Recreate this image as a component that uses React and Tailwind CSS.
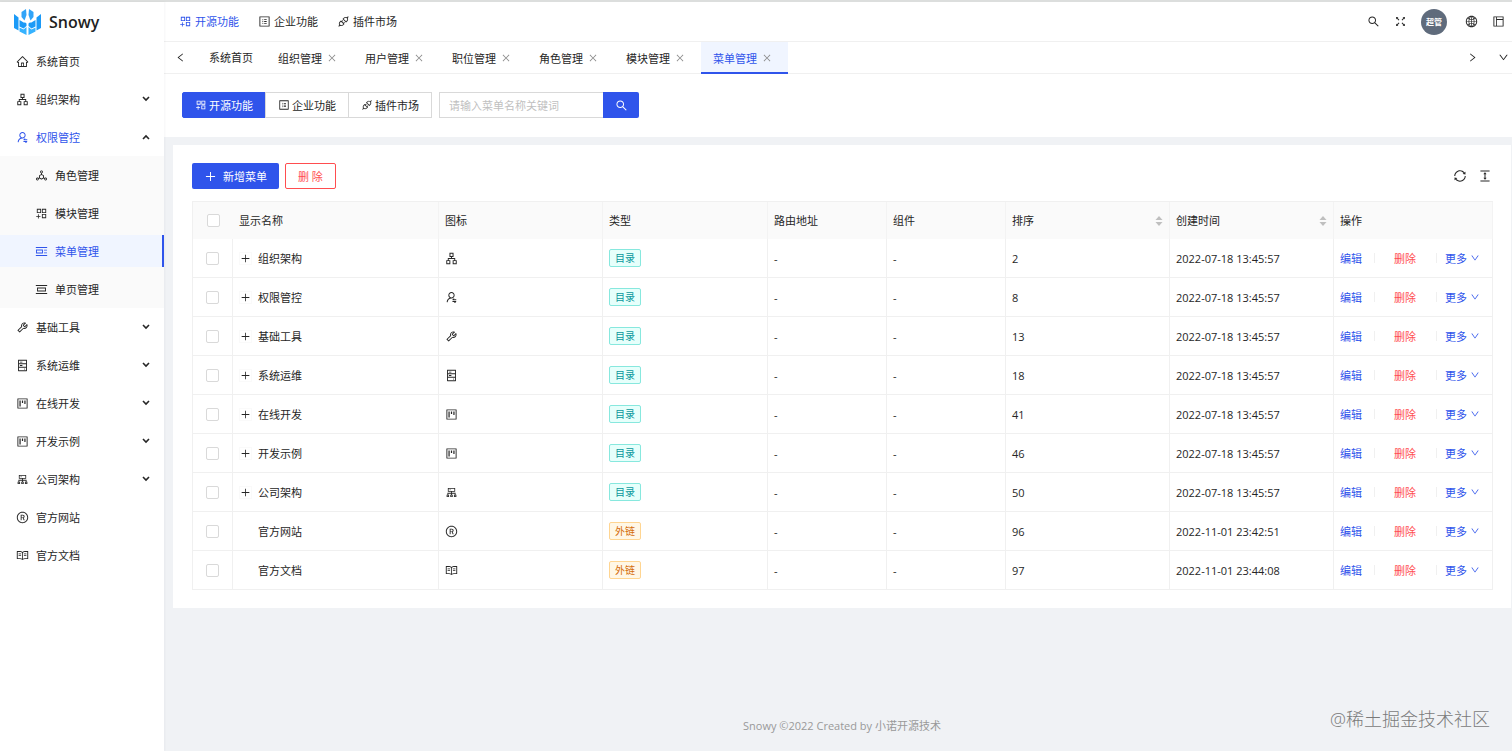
import {
  AiOutlineApartment,
  AiOutlineApi,
  AiOutlineAppstoreAdd,
  AiOutlineClose,
  AiOutlineCluster,
  AiOutlineColumnHeight,
  AiOutlineDeploymentUnit,
  AiOutlineDown,
  AiOutlineFullscreen,
  AiOutlineGlobal,
  AiOutlineHdd,
  AiOutlineHome,
  AiOutlineLayout,
  AiOutlineLeft,
  AiOutlinePicCenter,
  AiOutlinePicLeft,
  AiOutlinePlus,
  AiOutlineProfile,
  AiOutlineProject,
  AiOutlineRead,
  AiOutlineRight,
  AiOutlineSearch,
  AiOutlineSync,
  AiOutlineTool,
  AiOutlineTrademarkCircle,
  AiOutlineUserSwitch,
} from 'react-icons/ai';

const modules = [
  { name: '开源功能', icon: AiOutlineAppstoreAdd, active: true },
  { name: '企业功能', icon: AiOutlineProfile },
  { name: '插件市场', icon: AiOutlineApi },
];

const menus = [
  { name: '系统首页', icon: AiOutlineHome },
  { name: '组织架构', icon: AiOutlineApartment, group: true },
  {
    name: '权限管控',
    icon: AiOutlineUserSwitch,
    group: true,
    open: true,
    children: [
      { name: '角色管理', icon: AiOutlineDeploymentUnit },
      { name: '模块管理', icon: AiOutlineAppstoreAdd },
      { name: '菜单管理', icon: AiOutlinePicLeft, active: true },
      { name: '单页管理', icon: AiOutlinePicCenter },
    ],
  },
  { name: '基础工具', icon: AiOutlineTool, group: true },
  { name: '系统运维', icon: AiOutlineHdd, group: true },
  { name: '在线开发', icon: AiOutlineProject, group: true },
  { name: '开发示例', icon: AiOutlineProject, group: true },
  { name: '公司架构', icon: AiOutlineCluster, group: true },
  { name: '官方网站', icon: AiOutlineTrademarkCircle },
  { name: '官方文档', icon: AiOutlineRead },
];

const tabs = ['组织管理', '用户管理', '职位管理', '角色管理', '模块管理', '菜单管理'];

const rows = [
  { name: '组织架构', icon: AiOutlineApartment, type: '目录', sort: 2, time: '2022-07-18 13:45:57' },
  { name: '权限管控', icon: AiOutlineUserSwitch, type: '目录', sort: 8, time: '2022-07-18 13:45:57' },
  { name: '基础工具', icon: AiOutlineTool, type: '目录', sort: 13, time: '2022-07-18 13:45:57' },
  { name: '系统运维', icon: AiOutlineHdd, type: '目录', sort: 18, time: '2022-07-18 13:45:57' },
  { name: '在线开发', icon: AiOutlineProject, type: '目录', sort: 41, time: '2022-07-18 13:45:57' },
  { name: '开发示例', icon: AiOutlineProject, type: '目录', sort: 46, time: '2022-07-18 13:45:57' },
  { name: '公司架构', icon: AiOutlineCluster, type: '目录', sort: 50, time: '2022-07-18 13:45:57' },
  { name: '官方网站', icon: AiOutlineTrademarkCircle, type: '外链', sort: 96, time: '2022-11-01 23:42:51' },
  { name: '官方文档', icon: AiOutlineRead, type: '外链', sort: 97, time: '2022-11-01 23:44:08' },
];

const tagStyles = {
  目录: 'border-[#87e8de] bg-[#e6fffb] text-[#08979c]',
  外链: 'border-[#ffd591] bg-[#fff7e6] text-[#d46b08]',
};

function Logo() {
  return (
    <svg viewBox="0 0 27 26" className="h-[26px] w-[27px]" aria-hidden="true">
      <g fill="#1b9af7">
        <path d="M0 5l4.5 3.5v13L0 19z" />
        <path d="M27 5l-4.5 3.5v13L27 19z" />
        <path d="M5.5 11l5 3v-1l2 1.500v2.500l-3 2.500-4-2z" />
        <path d="M21.500 11l-5 3v-1l-2 1.500v2.500l3 2.500 4-2z" />
        <path d="M7.500 3l4.500-3 .5 6-2 5.500-3-3.500z" opacity=".9" />
        <path d="M19.500 3L15 0l-.5 6 2 5.500 3-3.500z" opacity=".9" />
      </g>
      <g fill="#35b2ff">
        <path d="M5.500 18.500l4 2 3-2.500v8l-7-3.500z" />
        <path d="M21.500 18.500l-4 2-3-2.500v8l7-3.500z" />
      </g>
    </svg>
  );
}

// Heavier than the regular outline arrow, used for collapsible menu groups
function GroupArrow({ open }) {
  return (
    <svg viewBox="0 0 8 6" className={open ? 'h-[6px] w-2 rotate-180' : 'h-[6px] w-2'} aria-hidden="true">
      <path d="M1 1l3 3 3-3" fill="none" stroke="currentColor" strokeWidth="1.6" />
    </svg>
  );
}

function Sorter() {
  return (
    <svg viewBox="0 0 8 10" className="h-[10px] w-2 text-[#bfbfbf]" aria-hidden="true">
      <path d="M4 0l3.5 4h-7z" fill="currentColor" />
      <path d="M4 10l3.5-4h-7z" fill="currentColor" />
    </svg>
  );
}

function Sidebar() {
  return (
    <aside className="relative z-10 w-[164px] shrink-0 bg-white shadow-[1px_0_2px_rgba(0,21,41,0.04)]">
      <div className="flex h-10 items-center gap-2 pl-[14px]">
        <Logo />
        <span className="text-base font-semibold text-[#1f1f1f]">Snowy</span>
      </div>
      <nav>
        {menus.map(({ name, icon: Icon, group, open, children }) => (
          <div key={name}>
            <a
              href="#"
              className={`flex h-[38px] items-center gap-[7px] pl-4 pr-[14px] ${open ? 'text-[#2f54eb]' : ''}`}
            >
              <Icon size={13} />
              <span className="flex-1">{name}</span>
              {group && (
                <span className="text-[#262626]">
                  <GroupArrow open={open} />
                </span>
              )}
            </a>
            {children && (
              <div className="bg-[#fafafa]">
                {children.map(({ name: sub, icon: SubIcon, active }) => (
                  <div key={sub} className="py-[3px]">
                    <a
                      href="#"
                      className={`flex h-8 items-center gap-[7px] pl-[35px] ${
                        active ? 'border-r-2 border-[#2f54eb] bg-[#f0f5ff] text-[#2f54eb]' : ''
                      }`}
                    >
                      <SubIcon size={13} />
                      {sub}
                    </a>
                  </div>
                ))}
              </div>
            )}
          </div>
        ))}
      </nav>
    </aside>
  );
}

function Header() {
  return (
    <header className="flex h-10 items-center justify-between border-b border-[#f0f0f0] bg-white pl-[15px] pr-[7px]">
      <nav className="flex gap-[19px]">
        {modules.map(({ name, icon: Icon, active }) => (
          <a key={name} href="#" className={`flex items-center gap-[3px] ${active ? 'text-[#2f54eb]' : ''}`}>
            <Icon size={13} />
            {name}
          </a>
        ))}
      </nav>
      <div className="flex items-center gap-[14px]">
        <button aria-label="搜索"><AiOutlineSearch size={13} /></button>
        <button aria-label="全屏"><AiOutlineFullscreen size={13} /></button>
        <span className="flex size-[26px] items-center justify-center rounded-full bg-[#5f6b7c] text-[8px] font-bold text-white">
          超管
        </span>
        <button aria-label="语言" className="ml-1"><AiOutlineGlobal size={13} /></button>
        <button aria-label="布局"><AiOutlineLayout size={13} /></button>
      </div>
    </header>
  );
}

function TabBar() {
  return (
    <div className="flex h-8 items-stretch border-b border-[#f0f0f0] bg-white">
      <button aria-label="向左" className="flex w-8 items-center justify-center">
        <AiOutlineLeft size={11} />
      </button>
      <a href="#" className="flex items-center px-[13px]">系统首页</a>
      {tabs.map((name) => {
        const active = name === '菜单管理';
        return (
          <div
            key={name}
            className={`-mb-px flex items-center gap-[5px] border-b-2 pl-3 pr-4 pt-[2px] ${
              active ? 'border-[#2f54eb] bg-[#f0f5ff] text-[#2f54eb]' : 'border-transparent'
            }`}
          >
            <a href="#">{name}</a>
            <button aria-label={`关闭${name}`} className="text-[#8c8c8c]">
              <AiOutlineClose size={10} />
            </button>
          </div>
        );
      })}
      <div className="ml-auto flex items-center gap-5 pr-[3px]">
        <button aria-label="向右"><AiOutlineRight size={11} /></button>
        <button aria-label="更多标签"><AiOutlineDown size={11} /></button>
      </div>
    </div>
  );
}

function FilterBar() {
  return (
    <div className="flex gap-[7px] bg-white px-[18px] pb-[19px] pt-[18px]">
      <div className="flex">
        {modules.map(({ name, icon: Icon, active }) => (
          <button
            key={name}
            className={`-mr-px flex h-[26px] items-center gap-[2px] border px-3 ${
              active ? 'rounded-l-xs border-[#2f54eb] bg-[#2f54eb] text-white' : 'border-[#d9d9d9] bg-white'
            }`}
          >
            <Icon size={12} />
            {name}
          </button>
        ))}
      </div>
      <form className="ml-px flex">
        <input
          type="text"
          aria-label="菜单名称关键词"
          placeholder="请输入菜单名称关键词"
          className="h-[26px] w-[164px] border border-r-0 border-[#d9d9d9] px-[9px] outline-none placeholder:text-[#bfbfbf]"
        />
        <button
          type="button"
          aria-label="查询"
          className="flex h-[26px] w-9 items-center justify-center rounded-r-xs bg-[#2f54eb] text-white"
        >
          <AiOutlineSearch size={13} />
        </button>
      </form>
    </div>
  );
}

function Checkbox({ label }) {
  return (
    <input
      type="checkbox"
      aria-label={label}
      className="mx-auto block size-[13px] appearance-none rounded-xs border border-[#d9d9d9] bg-white"
    />
  );
}

function MenuTable() {
  const cell = 'border-b border-r border-[#f0f0f0] px-[6px]';
  const head = 'border-r border-[#f3f3f3] px-[6px] font-normal';
  return (
    <table className="mt-3 w-full table-fixed border-separate border-spacing-0 border-l border-t border-[#f0f0f0] text-left">
      <colgroup>
        <col className="w-[40px]" />
        <col className="w-[206px]" />
        <col className="w-[164px]" />
        <col className="w-[165px]" />
        <col className="w-[119px]" />
        <col className="w-[119px]" />
        <col className="w-[164px]" />
        <col className="w-[164px]" />
        <col className="w-[159px]" />
      </colgroup>
      <thead>
        <tr className="h-[37px] bg-[#fafafa]">
          <th><Checkbox label="全选" /></th>
          <th className={head}>显示名称</th>
          <th className={head}>图标</th>
          <th className={head}>类型</th>
          <th className={head}>路由地址</th>
          <th className={head}>组件</th>
          <th className={head}>
            <div className="flex items-center justify-between">排序<Sorter /></div>
          </th>
          <th className={head}>
            <div className="flex items-center justify-between">创建时间<Sorter /></div>
          </th>
          <th className={head}>操作</th>
        </tr>
      </thead>
      <tbody>
        {rows.map(({ name, icon: Icon, type, sort, time }) => (
          <tr key={name} className="h-[39px]">
            <td className="border-b border-r border-[#f0f0f0]"><Checkbox label={name} /></td>
            <td className={cell}>
              <div className="flex items-center gap-[6px]">
                {type === '目录' ? (
                  <button
                    aria-label={`展开${name}`}
                    className="flex size-[13px] items-center justify-center border border-[#fafafa]"
                  >
                    <AiOutlinePlus size={11} className="shrink-0" />
                  </button>
                ) : (
                  <span className="size-[13px]" />
                )}
                {name}
              </div>
            </td>
            <td className={cell}><Icon size={13} /></td>
            <td className={cell}>
              <span className={`inline-block rounded-xs border px-[5px] text-[10px] leading-4 ${tagStyles[type]}`}>
                {type}
              </span>
            </td>
            <td className={cell}>-</td>
            <td className={cell}>-</td>
            <td className={cell}>{sort}</td>
            <td className={cell}>{time}</td>
            <td className={cell}>
              <div className="flex items-center whitespace-nowrap text-[#2f54eb]">
                <a href="#">编辑</a>
                <span className="ml-3 mr-[7px] h-[10px] w-px bg-[#f0f0f0]" />
                <button className="px-3 text-[#ff4d4f]">删除</button>
                <span className="mx-2 h-[10px] w-px bg-[#f0f0f0]" />
                <button className="flex items-center gap-[3px]">
                  更多
                  <AiOutlineDown size={10} />
                </button>
              </div>
            </td>
          </tr>
        ))}
      </tbody>
    </table>
  );
}

export default function App() {
  return (
    <div className="relative flex min-h-screen border-t-2 border-[#dcdedd] bg-[#f0f2f5] font-['Open_Sans','Noto_Sans_CJK_SC',sans-serif] text-[11px] leading-[17px] text-[#262626]">
      <Sidebar />
      <div className="flex min-w-0 flex-1 flex-col">
        <Header />
        <TabBar />
        <FilterBar />
        <main className="ml-[9px] mr-px mt-2 bg-white px-[19px] pb-[18px] pt-[18px]">
          <div className="flex items-center justify-between">
            <div className="flex gap-[6px]">
              <button className="flex h-[26px] items-center gap-[6px] rounded-xs bg-[#2f54eb] px-3 text-white">
                <AiOutlinePlus size={13} />
                新增菜单
              </button>
              <button className="h-[26px] rounded-xs border border-[#ff4d4f] px-3 text-[#ff4d4f]">删 除</button>
            </div>
            <div className="flex gap-[11px]">
              <button aria-label="刷新"><AiOutlineSync size={14} /></button>
              <button aria-label="密度"><AiOutlineColumnHeight size={14} /></button>
            </div>
          </div>
          <MenuTable />
        </main>
        <footer className="mt-auto pb-[17px] pl-2 text-center text-[#999]">
          Snowy ©2022 Created by 小诺开源技术
        </footer>
      </div>
      <div className="absolute bottom-4 right-[22px] text-lg leading-8 font-light text-[#7a7a7a]">
        @稀土掘金技术社区
      </div>
    </div>
  );
}
